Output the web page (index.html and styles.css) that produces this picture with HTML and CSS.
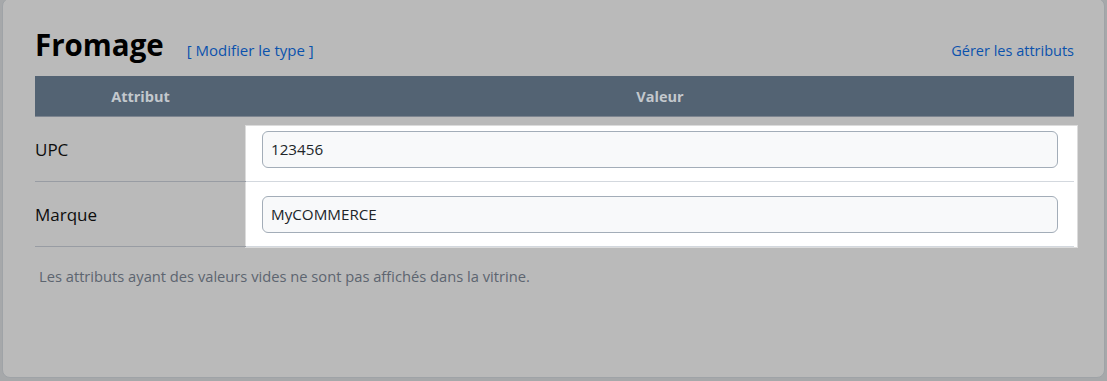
FILE: index.html
```html
<!DOCTYPE html>
<html lang="fr">
<head>
    <meta charset="UTF-8">
    <meta name="viewport" content="width=device-width, initial-scale=1.0">
    <title>Fromage - Attributs</title>
    <link rel="stylesheet" href="styles.css">
</head>
<body>
    <div class="card">
        <!-- Product type header -->
        <div class="head">
            <h1 class="title">Fromage</h1>
            <a class="link change-type" href="#">[ Modifier le type ]</a>
            <a class="link manage" href="#">Gérer les attributs</a>
        </div>

        <!-- Attributes table -->
        <div class="table-wrap">
            <div class="spotlight"></div>
            <table class="attrs">
                <thead>
                    <tr>
                        <th class="col-name">Attribut</th>
                        <th class="col-value">Valeur</th>
                    </tr>
                </thead>
                <tbody>
                    <tr>
                        <td class="name">UPC</td>
                        <td class="value"><input type="text" value="123456"></td>
                    </tr>
                    <tr>
                        <td class="name">Marque</td>
                        <td class="value"><input type="text" value="MyCOMMERCE"></td>
                    </tr>
                </tbody>
            </table>
        </div>

        <p class="note">Les attributs ayant des valeurs vides ne sont pas affichés dans la vitrine.</p>
    </div>
</body>
</html>
```

FILE: styles.css
```css
body {
    margin: 0;
    background: #a6a8aa;
    font-family: "Open Sans", "Noto Sans", sans-serif;
    overflow: hidden;
}
.card {
    box-sizing: border-box;
    margin: -2px 2px 0 2px;
    height: 380px;
    background: #bababa;
    border: 1px solid #9fa3a7;
    border-radius: 8px;
    padding: 28px 30px 0 32px;
}
.head {
    display: flex;
    align-items: baseline;
    height: 36px;
}
.title {
    margin: 0;
    font-size: 29.5px;
    line-height: 36px;
    font-weight: 700;
    color: #000;
}
.link {
    font-size: 15px;
    color: #0b52ad;
    text-decoration: none;
}
.change-type {
    margin-left: 23px;
}
.manage {
    margin-left: auto;
    font-size: 14.5px;
}
.table-wrap {
    position: relative;
    margin-top: 13px;
}
.attrs {
    position: relative;
    width: 100%;
    border-collapse: collapse;
    font-size: 17px;
}
.attrs th {
    background: #536373;
    color: #c3c8cd;
    font-size: 14.5px;
    font-weight: 700;
    height: 40px;
    padding: 0;
    border-bottom: 1px solid #7d8590;
}
.col-name {
    width: 211px;
}
.attrs td {
    height: 64px;
    padding: 0;
    border-bottom: 1px solid #989ca3;
}
.attrs td.value {
    border-bottom-color: #d3d8de;
    padding: 0 16px 0 16px;
}
.name {
    color: #0d0d0d;
}
.value input {
    box-sizing: border-box;
    display: block;
    width: 100%;
    height: 37px;
    padding: 0 8px;
    font-family: inherit;
    font-size: 15.2px;
    color: #212529;
    background: #f8f9fa;
    border: 1px solid #a3adb8;
    border-radius: 6px;
}
/* highlighted value column */
.spotlight {
    position: absolute;
    left: 211px;
    right: -3px;
    top: 50px;
    bottom: 0;
    background: #fff;
    box-shadow: 0 0 0 1px #dcdcdc;
}
.note {
    margin: 19px 0 0 4px;
    font-size: 14.7px;
    color: #5d6570;
}
```
